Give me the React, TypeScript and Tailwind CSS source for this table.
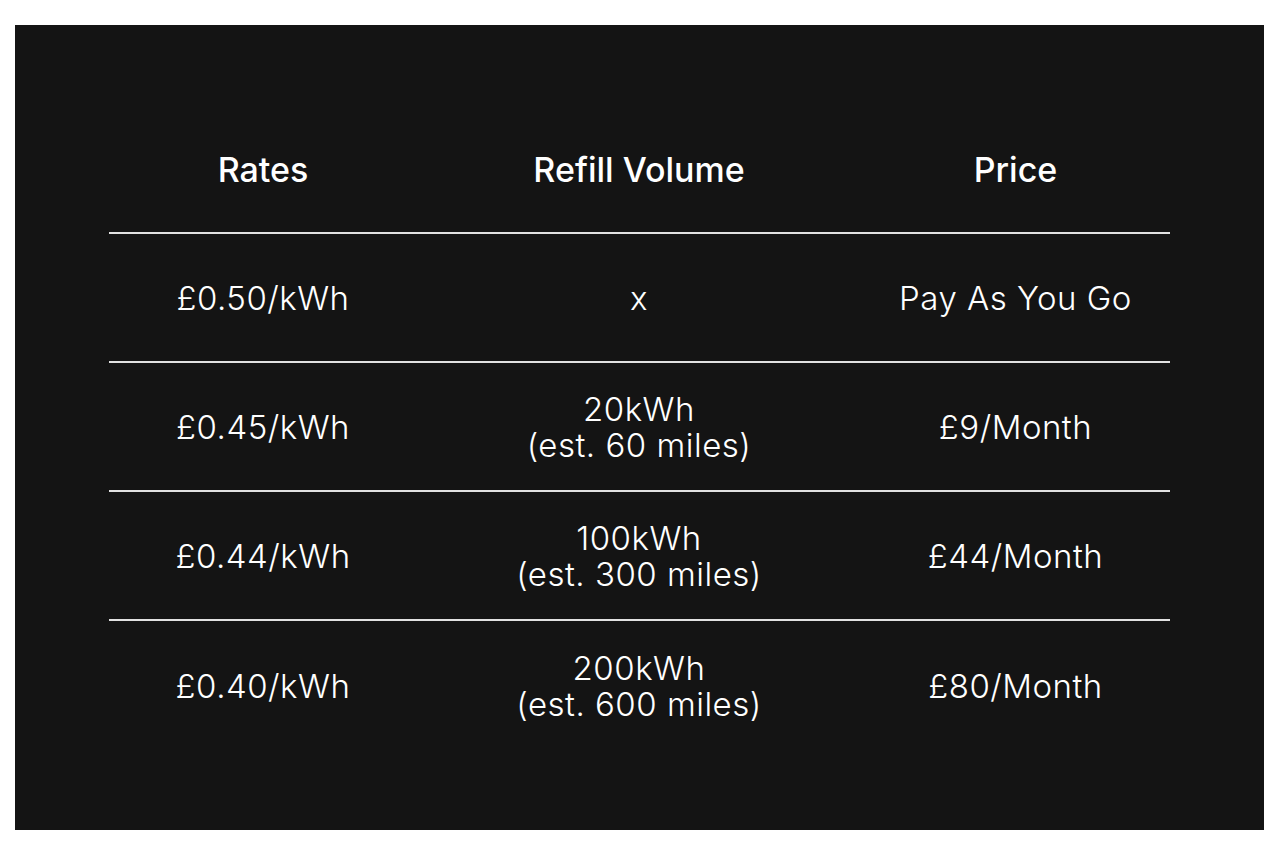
const rows = [
  { rate: "£0.50/kWh", volume: ["x"], price: "Pay As You Go" },
  { rate: "£0.45/kWh", volume: ["20kWh", "(est. 60 miles)"], price: "£9/Month" },
  { rate: "£0.44/kWh", volume: ["100kWh", "(est. 300 miles)"], price: "£44/Month" },
  { rate: "£0.40/kWh", volume: ["200kWh", "(est. 600 miles)"], price: "£80/Month" },
];

const cols = "grid grid-cols-[308px_444px_309px] items-center text-center";

export default function App() {
  return (
    <div className="min-h-screen bg-white pt-[25px] pl-[15px] font-['Inter','Liberation_Sans',sans-serif]">
      <div className="w-[1249px] bg-[#141414] px-[94px] pt-[83px] pb-[80px] text-white">
        {/* Header */}
        <div className={`${cols} h-[126px] border-b-2 border-[#e2e2e2]`}>
          <div className="text-[34px] font-medium leading-none">Rates</div>
          <div className="text-[34px] font-medium leading-none">Refill Volume</div>
          <div className="text-[34px] font-medium leading-none">Price</div>
        </div>

        {/* Rows */}
        {rows.map((r, i) => (
          <div
            key={r.rate}
            className={`${cols} h-[129px] ${i < rows.length - 1 ? "border-b-2 border-[#e2e2e2]" : ""}`}
          >
            <div className="text-[33px] font-light leading-[36px] tracking-[0.5px]">{r.rate}</div>
            <div className="text-[33px] font-light leading-[36px] tracking-[0.5px]">
              {r.volume.map((v) => (
                <div key={v}>{v}</div>
              ))}
            </div>
            <div className="text-[33px] font-light leading-[36px] tracking-[0.5px]">{r.price}</div>
          </div>
        ))}
      </div>
    </div>
  );
}
